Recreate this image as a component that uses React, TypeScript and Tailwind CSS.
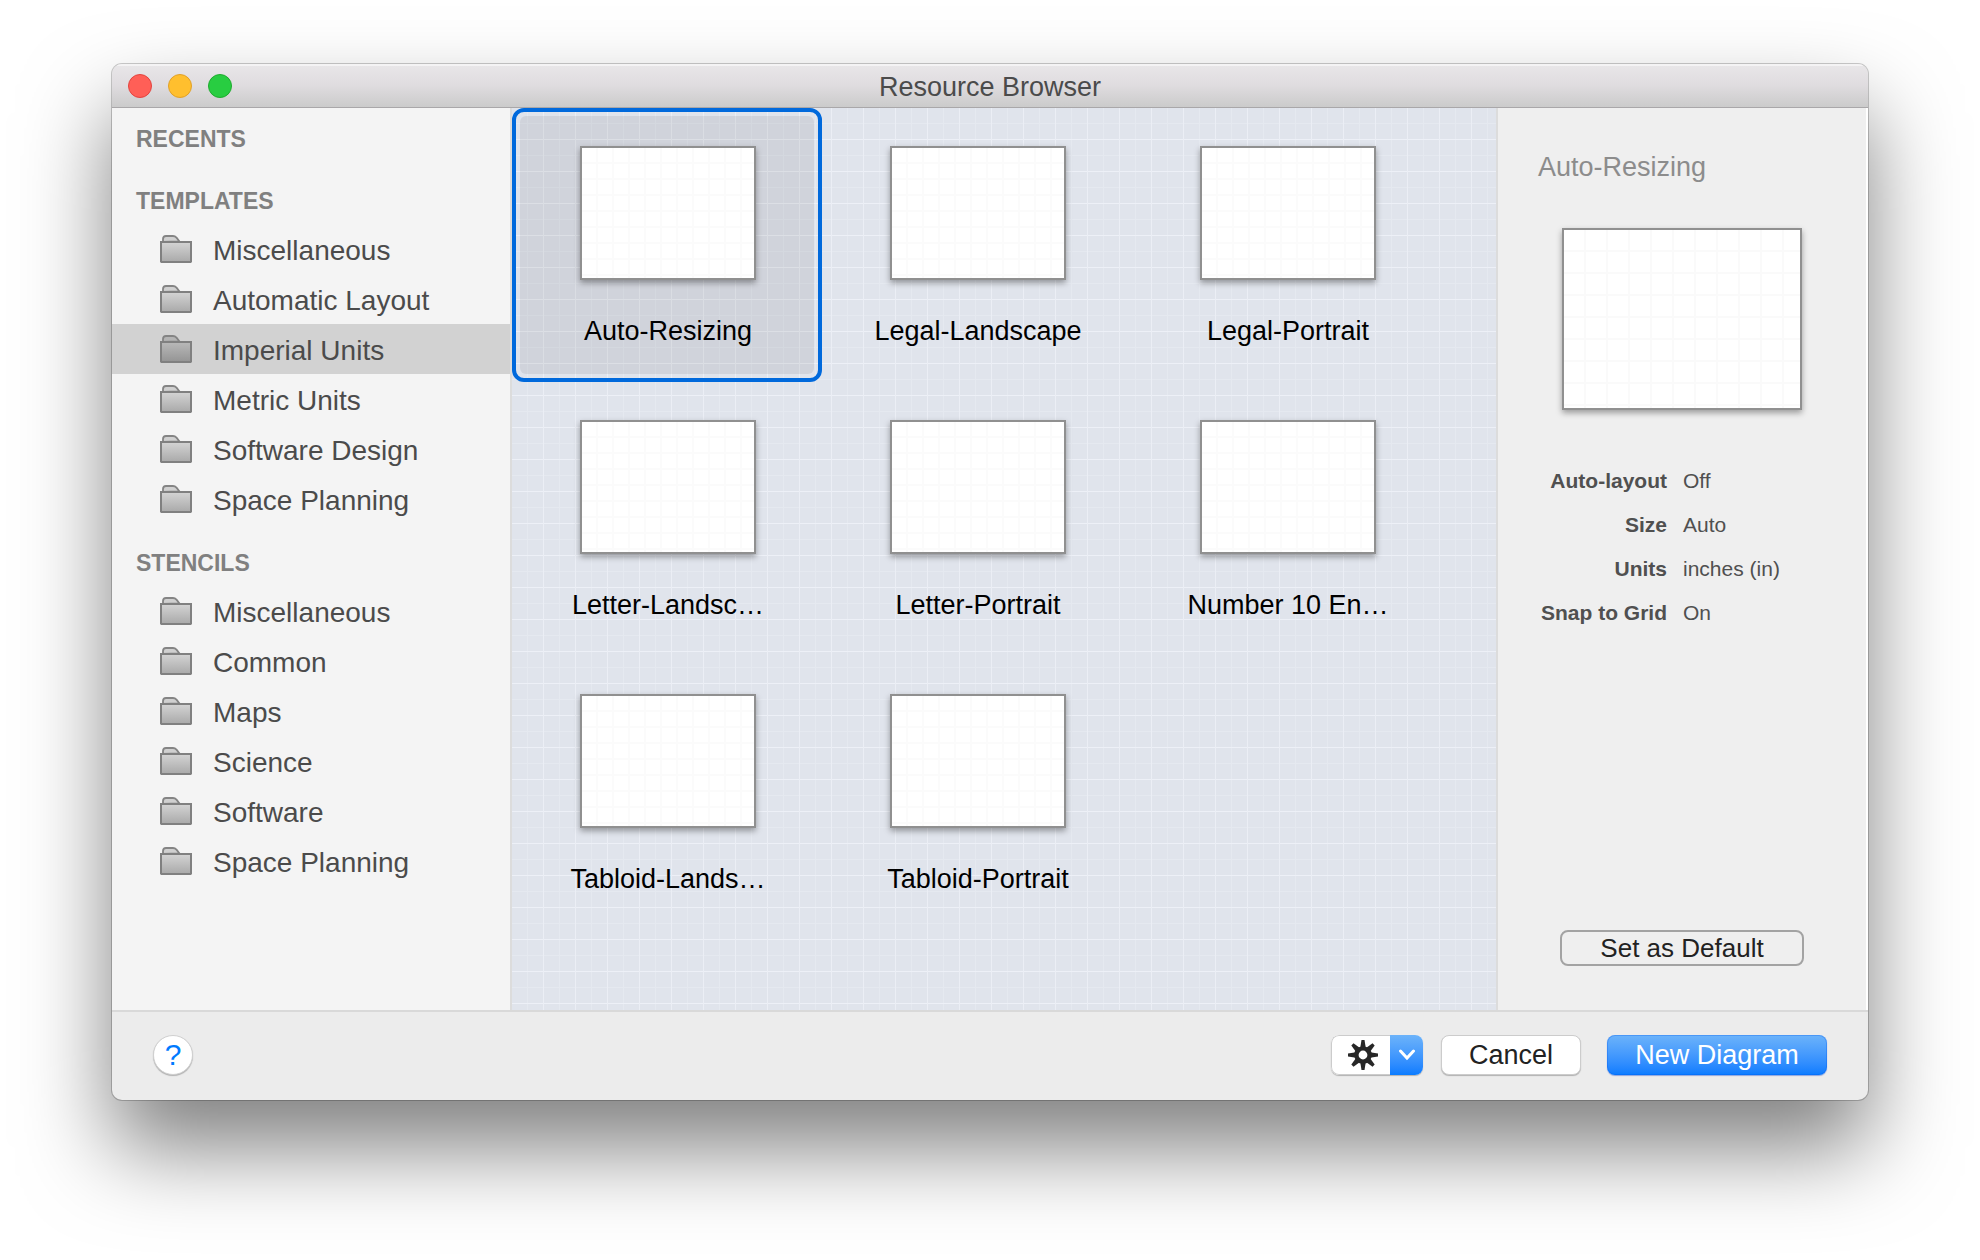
import React from "react";

type Template = { name: string };

const templateFolders = [
  "Miscellaneous",
  "Automatic Layout",
  "Imperial Units",
  "Metric Units",
  "Software Design",
  "Space Planning",
];

const stencilFolders = [
  "Miscellaneous",
  "Common",
  "Maps",
  "Science",
  "Software",
  "Space Planning",
];

const templates: Template[] = [
  { name: "Auto-Resizing" },
  { name: "Legal-Landscape" },
  { name: "Legal-Portrait" },
  { name: "Letter-Landsc…" },
  { name: "Letter-Portrait" },
  { name: "Number 10 En…" },
  { name: "Tabloid-Lands…" },
  { name: "Tabloid-Portrait" },
];

const details = [
  ["Auto-layout", "Off"],
  ["Size", "Auto"],
  ["Units", "inches (in)"],
  ["Snap to Grid", "On"],
];

function FolderIcon({ id, dark }: { id: string; dark?: boolean }) {
  return (
    <svg width="32" height="28" viewBox="0 0 32 28" className="shrink-0" aria-hidden="true">
      <defs>
        <linearGradient id={id} x1="0" y1="0" x2="0" y2="1">
          <stop offset="0" stopColor={dark ? "#b9b9b9" : "#d4d4d4"} />
          <stop offset="1" stopColor={dark ? "#949494" : "#a9a9a9"} />
        </linearGradient>
      </defs>
      <path
        d="M3 7V4Q3 1 6 1H13Q15 1 16.500 2.600L19.500 6.500Z"
        fill={dark ? "#b4b4b4" : "#d0d0d0"}
        stroke="#848484"
        strokeWidth="1.800"
        strokeLinejoin="round"
      />
      <path
        d="M1 7H31V26.500L30.500 27H1.500L1 26.500Z"
        fill={`url(#${id})`}
        stroke="#808080"
        strokeWidth="2"
      />
    </svg>
  );
}

function GearIcon() {
  return (
    <svg width="32" height="32" viewBox="-16 -16 32 32" aria-hidden="true">
      <g fill="#272727">
        {[0, 45, 90, 135, 180, 225, 270, 315].map((angle) => (
          <path key={angle} d="M-2.800 -7L-1.500 -15H1.500L2.800 -7Z" transform={`rotate(${angle})`} />
        ))}
      </g>
      <circle r="6.600" fill="none" stroke="#272727" strokeWidth="4.400" />
    </svg>
  );
}

function FolderGroup({
  title,
  folders,
  selected,
  first,
}: {
  title: string;
  folders: string[];
  selected?: string;
  first?: boolean;
}) {
  return (
    <section>
      <h2
        className={`flex items-end pb-2 pl-6 text-[23px] leading-[30px] font-bold text-[#808080] ${
          first ? "h-[54px]" : "h-[62px]"
        }`}
      >
        {title}
      </h2>
      <ul>
        {folders.map((name) => (
          <li key={name}>
            <button
              type="button"
              aria-pressed={name === selected}
              className={`flex h-[50px] w-full items-center gap-[21px] pl-12 text-left text-[28px] leading-8 text-[#4b4b4b] ${
                name === selected ? "bg-[#d2d2d2]" : ""
              }`}
            >
              <FolderIcon
                id={`folder-${title}-${name.replace(/ /g, "-")}`}
                dark={name === selected}
              />
              <span className="pt-1">{name}</span>
            </button>
          </li>
        ))}
      </ul>
    </section>
  );
}

function TemplateTile({ template, selected }: { template: Template; selected: boolean }) {
  return (
    <button
      type="button"
      aria-pressed={selected}
      className={`h-[274px] w-[310px] rounded-xl border-4 p-1 ${
        selected ? "border-[#0069dc]" : "border-transparent"
      }`}
    >
      <span
        className={`flex h-full flex-col items-center rounded-md pt-[30px] pl-0.5 ${
          selected ? "bg-black/7" : ""
        }`}
      >
        <span className="h-[134px] w-44 border-2 border-[#909090] bg-white bg-[linear-gradient(to_right,transparent_14px,#fbfbfb_14px),linear-gradient(to_bottom,transparent_14px,#fbfbfb_14px)] bg-size-[16px_16px] shadow-[0_3px_6px_rgba(0,0,0,0.35)]" />
        <span className="mt-[35px] text-[27px] leading-8 text-black">{template.name}</span>
      </span>
    </button>
  );
}

export default function App() {
  return (
    <div className="flex min-h-screen flex-col bg-white px-28 pt-16 pb-40 font-['Liberation_Sans',Arial,sans-serif]">
      <main className="flex flex-1 flex-col overflow-hidden rounded-[10px] bg-[#ececec] shadow-[0_0_0_1px_rgba(0,0,0,0.2),0_48px_88px_rgba(0,0,0,0.5)]">
        <header className="grid h-11 grid-cols-[1fr_auto_1fr] items-center border-b border-[#a9a7a9] bg-linear-to-b from-[#e9e7e9] via-[#dfdcdf] to-[#cbcbcb] px-4 shadow-[inset_0_2px_0_rgba(255,255,255,0.5)]">
          <div className="flex gap-4">
            <button type="button" aria-label="Close" className="size-6 rounded-full border border-[#e2443f] bg-[#ff5f57]" />
            <button type="button" aria-label="Minimize" className="size-6 rounded-full border border-[#e0a028] bg-[#ffbf2e]" />
            <button type="button" aria-label="Zoom" className="size-6 rounded-full border border-[#1fab2f] bg-[#28cd41]" />
          </div>
          <h1 className="pt-0.5 text-[27px] leading-8 text-[#4b4b4b]">Resource Browser</h1>
        </header>

        <div className="flex flex-1">
          <nav aria-label="Resources" className="w-[400px] shrink-0 border-r-2 border-[#dcdcdc] bg-[#f4f4f4]">
            <FolderGroup title="RECENTS" folders={[]} first />
            <FolderGroup title="TEMPLATES" folders={templateFolders} selected="Imperial Units" />
            <FolderGroup title="STENCILS" folders={stencilFolders} />
          </nav>

          <section
            aria-label="Templates"
            className="grid flex-1 grid-cols-[repeat(auto-fill,310px)] content-start bg-[#e0e4ec] bg-[linear-gradient(to_right,transparent_31px,#ebeef5_31px),linear-gradient(to_bottom,transparent_31px,#edf0f7_31px),linear-gradient(to_right,transparent_15px,#e5e9f0_15px),linear-gradient(to_bottom,transparent_15px,#e5e9f0_15px)] bg-size-[32px_32px,32px_32px,16px_16px,16px_16px]"
          >
            {templates.map((template, index) => (
              <TemplateTile key={template.name} template={template} selected={index === 0} />
            ))}
          </section>

          <aside className="flex w-[372px] shrink-0 flex-col border-r-2 border-l-2 border-r-white border-l-[#dcdcdc] bg-[#efefef] pt-[43px] pb-11">
            <h2 className="pl-10 text-[27px] leading-8 text-[#8c8c8c]">Auto-Resizing</h2>
            <div className="mt-[45px] h-[182px] w-60 self-center border-2 border-[#909090] bg-white bg-[linear-gradient(to_right,transparent_20px,#fafafa_20px),linear-gradient(to_bottom,transparent_20px,#fafafa_20px)] bg-size-[22px_22px] shadow-[0_3px_6px_rgba(0,0,0,0.35)]" />
            <dl className="mt-[49px] flex flex-col text-[21px] leading-[44px] text-[#505050]">
              {details.map(([label, value]) => (
                <div key={label} className="grid grid-cols-[169px_1fr] gap-4">
                  <dt className="text-right font-bold">{label}</dt>
                  <dd>{value}</dd>
                </div>
              ))}
            </dl>
            <button
              type="button"
              className="mt-auto flex h-9 w-[244px] items-center justify-center self-center rounded-lg border-2 border-[#a3a3a3] text-[26px] leading-8 text-[#222222]"
            >
              Set as Default
            </button>
          </aside>
        </div>

        <footer className="flex h-[90px] items-center gap-[18px] border-t-2 border-[#d9d9d9] pr-[41px] pb-0.5 pl-[41px]">
          <button
            type="button"
            aria-label="Help"
            className="mr-auto flex size-10 items-center justify-center rounded-full border border-[#d0d0d0] bg-white text-[30px] leading-8 text-[#007aff] shadow-[0_1px_1px_rgba(0,0,0,0.25)]"
          >
            ?
          </button>
          <button
            type="button"
            aria-label="Actions"
            className="flex h-10 w-[92px] overflow-hidden rounded-lg bg-white shadow-[0_1px_1px_rgba(0,0,0,0.25)]"
          >
            <span className="flex h-full flex-1 items-center justify-center rounded-l-lg border border-r-0 border-[#cccccc] pl-1">
              <GearIcon />
            </span>
            <span className="flex h-full w-[33px] items-center justify-center bg-linear-to-b from-[#6cb3fa] to-[#077cff]">
              <svg width="18" height="12" viewBox="0 0 18 12" aria-hidden="true">
                <path d="M2.500 2L9 9L15.500 2" fill="none" stroke="white" strokeWidth="3" strokeLinecap="round" />
              </svg>
            </span>
          </button>
          <button
            type="button"
            className="h-10 w-[140px] rounded-lg border border-[#cccccc] bg-white text-[27px] leading-8 text-[#222222] shadow-[0_1px_1px_rgba(0,0,0,0.25)]"
          >
            Cancel
          </button>
          <button
            type="button"
            className="ml-2 h-10 w-[220px] rounded-lg bg-linear-to-b from-[#6cb3fa] to-[#077cff] text-[27px] leading-8 text-white shadow-[inset_0_0_0_1px_rgba(0,90,240,0.3),0_1px_1px_rgba(0,60,200,0.4)]"
          >
            New Diagram
          </button>
        </footer>
      </main>
    </div>
  );
}
